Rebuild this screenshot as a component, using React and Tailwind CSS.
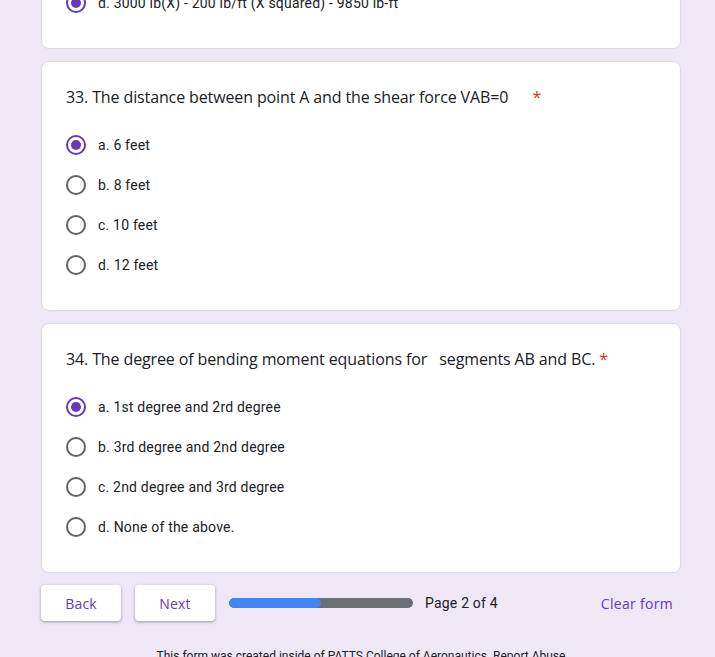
import React from "react";

const TITLE = { fontFamily: '"Open Sans", "Noto Sans", sans-serif' };
const BODY = { fontFamily: 'Roboto, "Liberation Sans", sans-serif' };

function Radio({ checked }) {
  return (
    <div
      className={
        "w-5 h-5 rounded-full border-2 flex items-center justify-center shrink-0 " +
        (checked ? "border-[#673ab7]" : "border-[#5f6368]")
      }
    >
      {checked && <div className="w-[10px] h-[10px] rounded-full bg-[#673ab7]" />}
    </div>
  );
}

function Option({ label, checked }) {
  return (
    <div className="h-10 flex items-center gap-3">
      <Radio checked={checked} />
      <span className="text-[14px] text-[#202124] leading-5 tracking-[0.2px]" style={BODY}>
        {label}
      </span>
    </div>
  );
}

function Question({ title, options, selected }) {
  return (
    <div className="bg-white border border-[#dadce0] rounded-lg px-6 pt-[23px] pb-[25px]">
      <div
        className="text-[16px] leading-6 text-[#202124] whitespace-pre-wrap tracking-[-0.12px]"
        style={TITLE}
      >
        {title}
        <span className="text-[#d93025] pl-[4px]">*</span>
      </div>
      <div className="mt-4 flex flex-col">
        {options.map((o, i) => (
          <Option key={i} label={o} checked={i === selected} />
        ))}
      </div>
    </div>
  );
}

const btnShadow =
  "shadow-[0_1px_2px_rgba(60,64,67,0.3),0_1px_3px_1px_rgba(60,64,67,0.15)]";

export default function App() {
  return (
    <div className="h-[657px] overflow-hidden bg-[#ede7f6]">
      <div className="ml-[41px] w-[640px] flex flex-col gap-3 -mt-[17px]">
        <div className="bg-white border border-[#dadce0] border-t-0 rounded-b-lg px-6 pb-[25px]">
          <Option label="d. 3000 lb(X) - 200 lb/ft (X squared) - 9850 lb-ft" checked />
        </div>
        <Question
          title={"33. The distance between point A and the shear force VAB=0     "}
          options={["a. 6 feet", "b. 8 feet", "c. 10 feet", "d. 12 feet"]}
          selected={0}
        />
        <Question
          title={"34. The degree of bending moment equations for   segments AB and BC."}
          options={[
            "a. 1st degree and 2rd degree",
            "b. 3rd degree and 2nd degree",
            "c. 2nd degree and 3rd degree",
            "d. None of the above.",
          ]}
          selected={0}
        />
        <div className="flex items-center">
          <button
            className={"w-20 h-9 bg-white rounded text-[14px] font-medium text-[#673ab7] tracking-[0.2px] " + btnShadow}
            style={TITLE}
          >
            Back
          </button>
          <button
            className={"ml-[14px] w-20 h-9 bg-white rounded text-[14px] font-medium text-[#673ab7] tracking-[0.2px] " + btnShadow}
            style={TITLE}
          >
            Next
          </button>
          <div className="ml-[14px] w-[184px] h-[10px] rounded-full bg-[#6b6e74] overflow-hidden">
            <div className="w-1/2 h-full rounded-full bg-[#4285f4]" />
          </div>
          <span className="ml-3 text-[14px] text-[#202124] tracking-[0.2px]" style={BODY}>
            Page 2 of 4
          </span>
          <div className="flex-1" />
          <button
            className="h-9 px-2 text-[14px] font-medium text-[#673ab7] tracking-[0.3px]"
            style={TITLE}
          >
            Clear form
          </button>
        </div>
        <div className="text-center text-[12px] text-[#202124] mt-[14px]" style={BODY}>
          This form was created inside of PATTS College of Aeronautics.{" "}
          <span className="underline">Report Abuse</span>
        </div>
      </div>
    </div>
  );
}
